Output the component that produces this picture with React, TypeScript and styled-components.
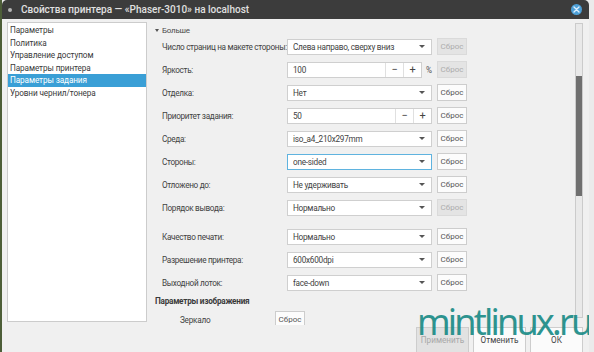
import React from "react";
import styled, { createGlobalStyle } from "styled-components";

const GlobalStyle = createGlobalStyle`
  html, body {
    margin: 0;
    padding: 0;
    width: 594px;
    height: 352px;
    overflow: hidden;
    background: linear-gradient(to right, #4d5e38 0 2px, #ebebeb 2px);
    font-family: Roboto, "Noto Sans", sans-serif;
  }
`;

type Row = {
  label: string;
  kind: "combo" | "spin";
  value: string;
  resetDisabled?: boolean;
  focused?: boolean;
  gapBefore?: boolean;
  percent?: boolean;
};

const rows: Row[] = [
  { label: "Число страниц на макете стороны:", kind: "combo", value: "Слева направо, сверху вниз", resetDisabled: true },
  { label: "Яркость:", kind: "spin", value: "100", resetDisabled: true, percent: true },
  { label: "Отделка:", kind: "combo", value: "Нет" },
  { label: "Приоритет задания:", kind: "spin", value: "50" },
  { label: "Среда:", kind: "combo", value: "iso_a4_210x297mm" },
  { label: "Стороны:", kind: "combo", value: "one-sided", focused: true },
  { label: "Отложено до:", kind: "combo", value: "Не удерживать" },
  { label: "Порядок вывода:", kind: "combo", value: "Нормально", resetDisabled: true },
  { label: "Качество печати:", kind: "combo", value: "Нормально", gapBefore: true },
  { label: "Разрешение принтера:", kind: "combo", value: "600x600dpi" },
  { label: "Выходной лоток:", kind: "combo", value: "face-down" },
];

const pages = [
  "Параметры",
  "Политика",
  "Управление доступом",
  "Параметры принтера",
  "Параметры задания",
  "Уровни чернил/тонера",
];

export default function App() {
  return (
    <>
      <GlobalStyle />
      <Window>
        <TitleBar>
          <MenuDot />
          <Title>Свойства принтера — «Phaser-3010» на localhost</Title>
          <CloseButton>
            <svg width="7" height="7" viewBox="0 0 7 7">
              <path d="M1 1L6 6M6 1L1 6" stroke="#dcefff" strokeWidth="1.4" strokeLinecap="round" />
            </svg>
          </CloseButton>
        </TitleBar>
        <Main>
          <Sidebar>
            {pages.map((p, i) => (
              <PageItem key={p} $selected={i === 4}>
                {p}
              </PageItem>
            ))}
          </Sidebar>
          <RightColumn>
            <ScrollRow>
              <Form>
                <Expander>
                  <ExpanderArrow />
                  Больше
                </Expander>
                {rows.map((r) => (
                  <FormRow key={r.label} $gap={r.gapBefore}>
                    <Label>{r.label}</Label>
                    {r.kind === "combo" ? (
                      <Combo $focused={r.focused}>
                        <ComboText>{r.value}</ComboText>
                        <ComboArrow />
                      </Combo>
                    ) : (
                      <SpinWrap>
                        <Spin $short={r.percent}>
                          <SpinInput>{r.value}</SpinInput>
                          <SpinButton>−</SpinButton>
                          <SpinButton>+</SpinButton>
                        </Spin>
                        {r.percent && <Percent>%</Percent>}
                      </SpinWrap>
                    )}
                    <ResetButton $disabled={r.resetDisabled}>Сброс</ResetButton>
                  </FormRow>
                ))}
                <SectionTitle>Параметры изображения</SectionTitle>
                <MirrorRow>
                  <MirrorLabel>Зеркало</MirrorLabel>
                  <ResetButton>Сброс</ResetButton>
                </MirrorRow>
              </Form>
              <ScrollTrack>
                <ScrollThumb />
              </ScrollTrack>
            </ScrollRow>
            <ButtonBar>
              <DialogButton $disabled>Применить</DialogButton>
              <DialogButton>Отменить</DialogButton>
              <DialogButton>ОК</DialogButton>
            </ButtonBar>
          </RightColumn>
        </Main>
        <Watermark>mintlinux.ru</Watermark>
      </Window>
    </>
  );
}

const Window = styled.div`
  position: relative;
  margin-left: 2px;
  width: 587px;
  height: 352px;
  background: #f0f0f0;
  border-radius: 5px 5px 0 0;
  overflow: hidden;
  display: flex;
  flex-direction: column;
`;

const TitleBar = styled.div`
  height: 19px;
  flex: none;
  background: #3c3c3c;
  display: flex;
  align-items: center;
  padding: 0 7px 0 6px;
`;

const MenuDot = styled.div`
  width: 4px;
  height: 4px;
  border-radius: 50%;
  background: #b5b5b5;
  margin-right: 9px;
`;

const Title = styled.div`
  flex: 1;
  color: #e0e0e0;
  font-size: 10px;
  font-weight: 500;
  white-space: nowrap;
`;

const CloseButton = styled.div`
  width: 11px;
  height: 11px;
  border-radius: 50%;
  background: #4d9fd6;
  display: flex;
  align-items: center;
  justify-content: center;
`;

const Main = styled.div`
  flex: 1;
  display: flex;
  padding: 3px 6px 0 5px;
  gap: 5px;
  min-height: 0;
`;

const Sidebar = styled.div`
  width: 140px;
  height: 300px;
  flex: none;
  box-sizing: border-box;
  background: #ffffff;
  border: 1px solid #cccccc;
  padding-top: 1px;
`;

const PageItem = styled.div<{ $selected?: boolean }>`
  height: 12.6px;
  line-height: 12.6px;
  padding-left: 2px;
  font-size: 8.2px;
  letter-spacing: -0.1px;
  white-space: nowrap;
  color: ${(p) => (p.$selected ? "#ffffff" : "#3a3a3a")};
  background: ${(p) => (p.$selected ? "#3a9fd6" : "transparent")};
`;

const RightColumn = styled.div`
  flex: 1;
  display: flex;
  flex-direction: column;
  min-width: 0;
`;

const ScrollRow = styled.div`
  height: 303px;
  flex: none;
  display: flex;
  overflow: hidden;
`;

const Form = styled.div`
  flex: 1;
  padding: 3px 0 0 3px;
  color: #424242;
  font-size: 8.2px;
  letter-spacing: -0.25px;
`;

const Expander = styled.div`
  height: 10px;
  display: flex;
  align-items: center;
  font-size: 8px;
  color: #4a4a4a;
`;

const ExpanderArrow = styled.span`
  width: 0;
  height: 0;
  border-left: 2.5px solid transparent;
  border-right: 2.5px solid transparent;
  border-top: 3px solid #555;
  margin-right: 3px;
`;

const FormRow = styled.div<{ $gap?: boolean }>`
  height: 23px;
  display: flex;
  align-items: center;
  padding-left: 7px;
  margin-top: ${(p) => (p.$gap ? "6px" : "0")};
`;

const Label = styled.div`
  width: 125px;
  flex: none;
  white-space: nowrap;
  letter-spacing: -0.32px;
`;

const Combo = styled.div<{ $focused?: boolean }>`
  width: 145px;
  height: 16px;
  box-sizing: border-box;
  flex: none;
  background: #ffffff;
  border: 1px solid ${(p) => (p.$focused ? "#5fb3df" : "#cfcfcf")};
  display: flex;
  align-items: center;
  padding: 0 6px 0 5px;
`;

const ComboText = styled.div`
  flex: 1;
  white-space: nowrap;
  overflow: hidden;
`;

const ComboArrow = styled.span`
  width: 0;
  height: 0;
  border-left: 3px solid transparent;
  border-right: 3px solid transparent;
  border-top: 3px solid #555;
`;

const SpinWrap = styled.div`
  width: 145px;
  flex: none;
  display: flex;
  align-items: center;
`;

const Spin = styled.div<{ $short?: boolean }>`
  width: ${(p) => (p.$short ? "135px" : "145px")};
  height: 16px;
  box-sizing: border-box;
  background: #ffffff;
  border: 1px solid #cfcfcf;
  display: flex;
`;

const SpinInput = styled.div`
  flex: 1;
  padding-left: 5px;
  display: flex;
  align-items: center;
`;

const SpinButton = styled.div`
  width: 17px;
  border-left: 1px solid #e0e0e0;
  display: flex;
  align-items: center;
  justify-content: center;
  font-size: 11px;
  color: #444;
`;

const Percent = styled.span`
  margin-left: 4px;
  color: #555;
`;

const ResetButton = styled.div<{ $disabled?: boolean }>`
  width: 30px;
  height: 17px;
  box-sizing: border-box;
  margin-left: 5px;
  flex: none;
  display: flex;
  align-items: center;
  justify-content: center;
  font-size: 8px;
  letter-spacing: 0;
  background: ${(p) => (p.$disabled ? "#e4e4e4" : "#fcfcfc")};
  color: ${(p) => (p.$disabled ? "#acacac" : "#555555")};
  border: 1px solid ${(p) => (p.$disabled ? "#dadada" : "#cdcdcd")};
`;

const SectionTitle = styled.div`
  height: 15px;
  line-height: 15px;
  font-weight: 700;
  color: #3a3a3a;
`;

const MirrorRow = styled.div`
  display: flex;
  align-items: center;
  padding-left: 25px;
  margin-top: 2px;
`;

const MirrorLabel = styled.div`
  width: 90px;
`;

const ScrollTrack = styled.div`
  position: relative;
  width: 8px;
  height: 295px;
  margin-top: 1px;
  box-sizing: border-box;
  background: #e9e9e9;
  border: 1px solid #cbcbcb;
  flex: none;
`;

const ScrollThumb = styled.div`
  position: absolute;
  left: 0;
  right: 0;
  top: 52px;
  height: 120px;
  background: #6f6f6f;
`;

const ButtonBar = styled.div`
  display: flex;
  justify-content: flex-end;
  gap: 4px;
  margin-top: 2px;
`;

const DialogButton = styled.div<{ $disabled?: boolean }>`
  width: 53px;
  height: 26px;
  box-sizing: border-box;
  display: flex;
  align-items: center;
  justify-content: center;
  font-size: 8.2px;
  background: ${(p) => (p.$disabled ? "#e2e2e2" : "#fbfbfb")};
  color: ${(p) => (p.$disabled ? "#a8a8a8" : "#444")};
  border: 1px solid #cdcdcd;
`;

const Watermark = styled.div`
  position: absolute;
  left: 415px;
  top: 304px;
  font-family: "Noto Sans", sans-serif;
  font-size: 36px;
  letter-spacing: -2.8px;
  color: #1c8c87;
  opacity: 0.92;
  line-height: 1;
  white-space: nowrap;
`;
